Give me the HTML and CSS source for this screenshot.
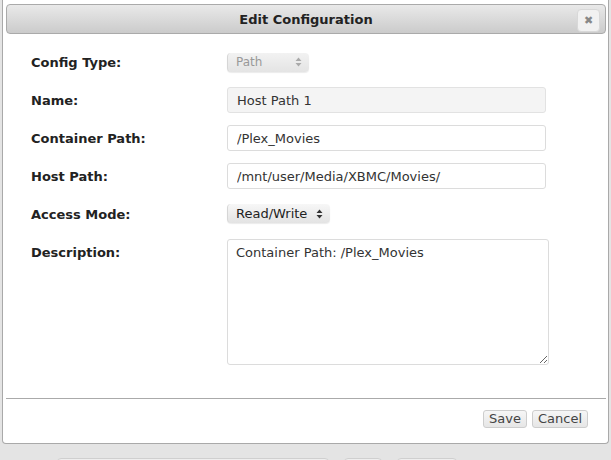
FILE: index.html
```html
<!DOCTYPE html>
<html lang="en">
<head>
    <meta charset="UTF-8">
    <meta name="viewport" content="width=device-width, initial-scale=1.0">
    <title>Edit Configuration</title>
    <link rel="stylesheet" href="styles.css">
</head>

<body>

<div class="dialog">
    <div class="dialog-title">
        <span>Edit Configuration</span>
        <button class="close-button">&#x2716;</button>
    </div>

    <form class="config-form">
        <div class="form-row">
            <label>Config Type:</label>
            <div class="select-box disabled">
                <span>Path</span>
                <svg width="7" height="10" viewBox="0 0 7 10"><path d="M3.5 0.5 L6.5 4 H0.5 Z M3.5 9.5 L6.5 6 H0.5 Z"/></svg>
            </div>
        </div>
        <div class="form-row">
            <label>Name:</label>
            <input type="text" class="text-input readonly" value="Host Path 1" readonly>
        </div>
        <div class="form-row">
            <label>Container Path:</label>
            <input type="text" class="text-input" value="/Plex_Movies">
        </div>
        <div class="form-row">
            <label>Host Path:</label>
            <input type="text" class="text-input" value="/mnt/user/Media/XBMC/Movies/">
        </div>
        <div class="form-row">
            <label>Access Mode:</label>
            <div class="select-box access">
                <span>Read/Write</span>
                <svg width="7" height="10" viewBox="0 0 7 10"><path d="M3.5 0.5 L6.5 4 H0.5 Z M3.5 9.5 L6.5 6 H0.5 Z"/></svg>
            </div>
        </div>
        <div class="form-row top">
            <label>Description:</label>
            <textarea class="text-area">Container Path: /Plex_Movies</textarea>
        </div>
    </form>

    <div class="dialog-footer">
        <button>Save</button>
        <button>Cancel</button>
    </div>
</div>

<div class="page-below">
    <div class="below-box wide"></div>
    <div class="below-box small"></div>
    <div class="below-box medium"></div>
</div>

</body>
</html>
```

FILE: styles.css
```css
/* General Styles */
body {
    font-family: "DejaVu Sans", Verdana, sans-serif;
    font-size: 13px;
    color: #333;
    margin: 0;
    padding: 0;
    background-color: #e4e4e4;
    height: 460px;
    overflow: hidden;
}

.dialog {
    margin: 0 2px;
    height: 444px;
    box-sizing: border-box;
    background-color: white;
    border: 1px solid #a9a9a9;
    border-top: none;
    border-radius: 0 0 4px 4px;
    display: flex;
    flex-direction: column;
}

.dialog-title {
    margin: 4px 2px 0 3px;
    height: 30px;
    box-sizing: border-box;
    border: 1px solid #aaa;
    border-radius: 4px;
    background: linear-gradient(#e9e9e9, #cbcbcb);
    display: flex;
    align-items: center;
    justify-content: center;
    position: relative;
    font-weight: bold;
    color: #222;
}

.close-button {
    position: absolute;
    right: 5px;
    top: 4px;
    width: 23px;
    height: 23px;
    border: 1px solid #d8d8d8;
    border-radius: 4px;
    background-color: #f1f1f1;
    color: #888;
    font-size: 11px;
    padding: 0;
    font-family: "DejaVu Sans", sans-serif;
}

.config-form {
    padding: 15px 0 0 28px;
    display: flex;
    flex-direction: column;
    gap: 12px;
    height: 364px;
    box-sizing: border-box;
    flex-shrink: 0;
}

.form-row {
    display: flex;
    align-items: center;
    height: 26px;
}

.form-row.top {
    align-items: flex-start;
    height: auto;
}

.form-row label {
    width: 196px;
    font-weight: bold;
    color: #222;
    line-height: 25px;
    padding-top: 1px;
}

.text-input {
    width: 319px;
    height: 26px;
    box-sizing: border-box;
    border: 1px solid #dcdcdc;
    border-radius: 3px;
    padding: 0 9px;
    font-family: "DejaVu Sans", sans-serif;
    font-size: 13px;
    color: #333;
    background-color: white;
    outline: none;
}

.text-input.readonly {
    background-color: #f4f4f4;
    border-color: #e2e2e2;
}

.select-box {
    height: 19px;
    box-sizing: border-box;
    border-radius: 4px;
    display: flex;
    align-items: center;
    justify-content: space-between;
    padding: 0 7px 0 8px;
    background: linear-gradient(#f7f7f7, #e3e3e3);
    box-shadow: 0 1px 1px rgba(0, 0, 0, 0.08);
    border-left: 1px solid #d6d6d6;
}

.select-box.disabled {
    width: 82px;
    font-size: 12px;
    color: #999;
    background: linear-gradient(#f2f2f2, #e4e4e4);
}

.select-box.disabled svg {
    fill: #aaa;
}

.select-box.access {
    width: 103px;
    color: #222;
    margin-top: -1px;
}

.select-box.access svg {
    fill: #333;
}

.text-area {
    width: 322px;
    height: 126px;
    box-sizing: border-box;
    border: 1px solid #dcdcdc;
    border-radius: 3px;
    padding: 5px 8px;
    font-family: "DejaVu Sans", sans-serif;
    font-size: 13px;
    color: #333;
    outline: none;
}

.dialog-footer {
    margin: 0 2px 0 3px;
    border-top: 1px solid #aaa;
    padding: 11px 18px 0 0;
    display: flex;
    justify-content: flex-end;
    gap: 5px;
}

.dialog-footer button {
    height: 18px;
    padding: 0 5px;
    font-family: "DejaVu Sans", sans-serif;
    font-size: 13px;
    color: #444;
    background: linear-gradient(#f6f6f6, #e6e6e6);
    border: 1px solid #cdcdcd;
    border-radius: 3px;
    line-height: 16px;
}

/* Page behind the dialog */
.page-below {
    display: flex;
    margin-top: 14px;
    padding-left: 57px;
    gap: 15px;
}

.below-box {
    height: 20px;
    border: 1px solid #cfcfcf;
    border-radius: 4px;
    background-color: #eee;
}

.below-box.wide {
    width: 270px;
}

.below-box.small {
    width: 36px;
}

.below-box.medium {
    width: 58px;
}
```
